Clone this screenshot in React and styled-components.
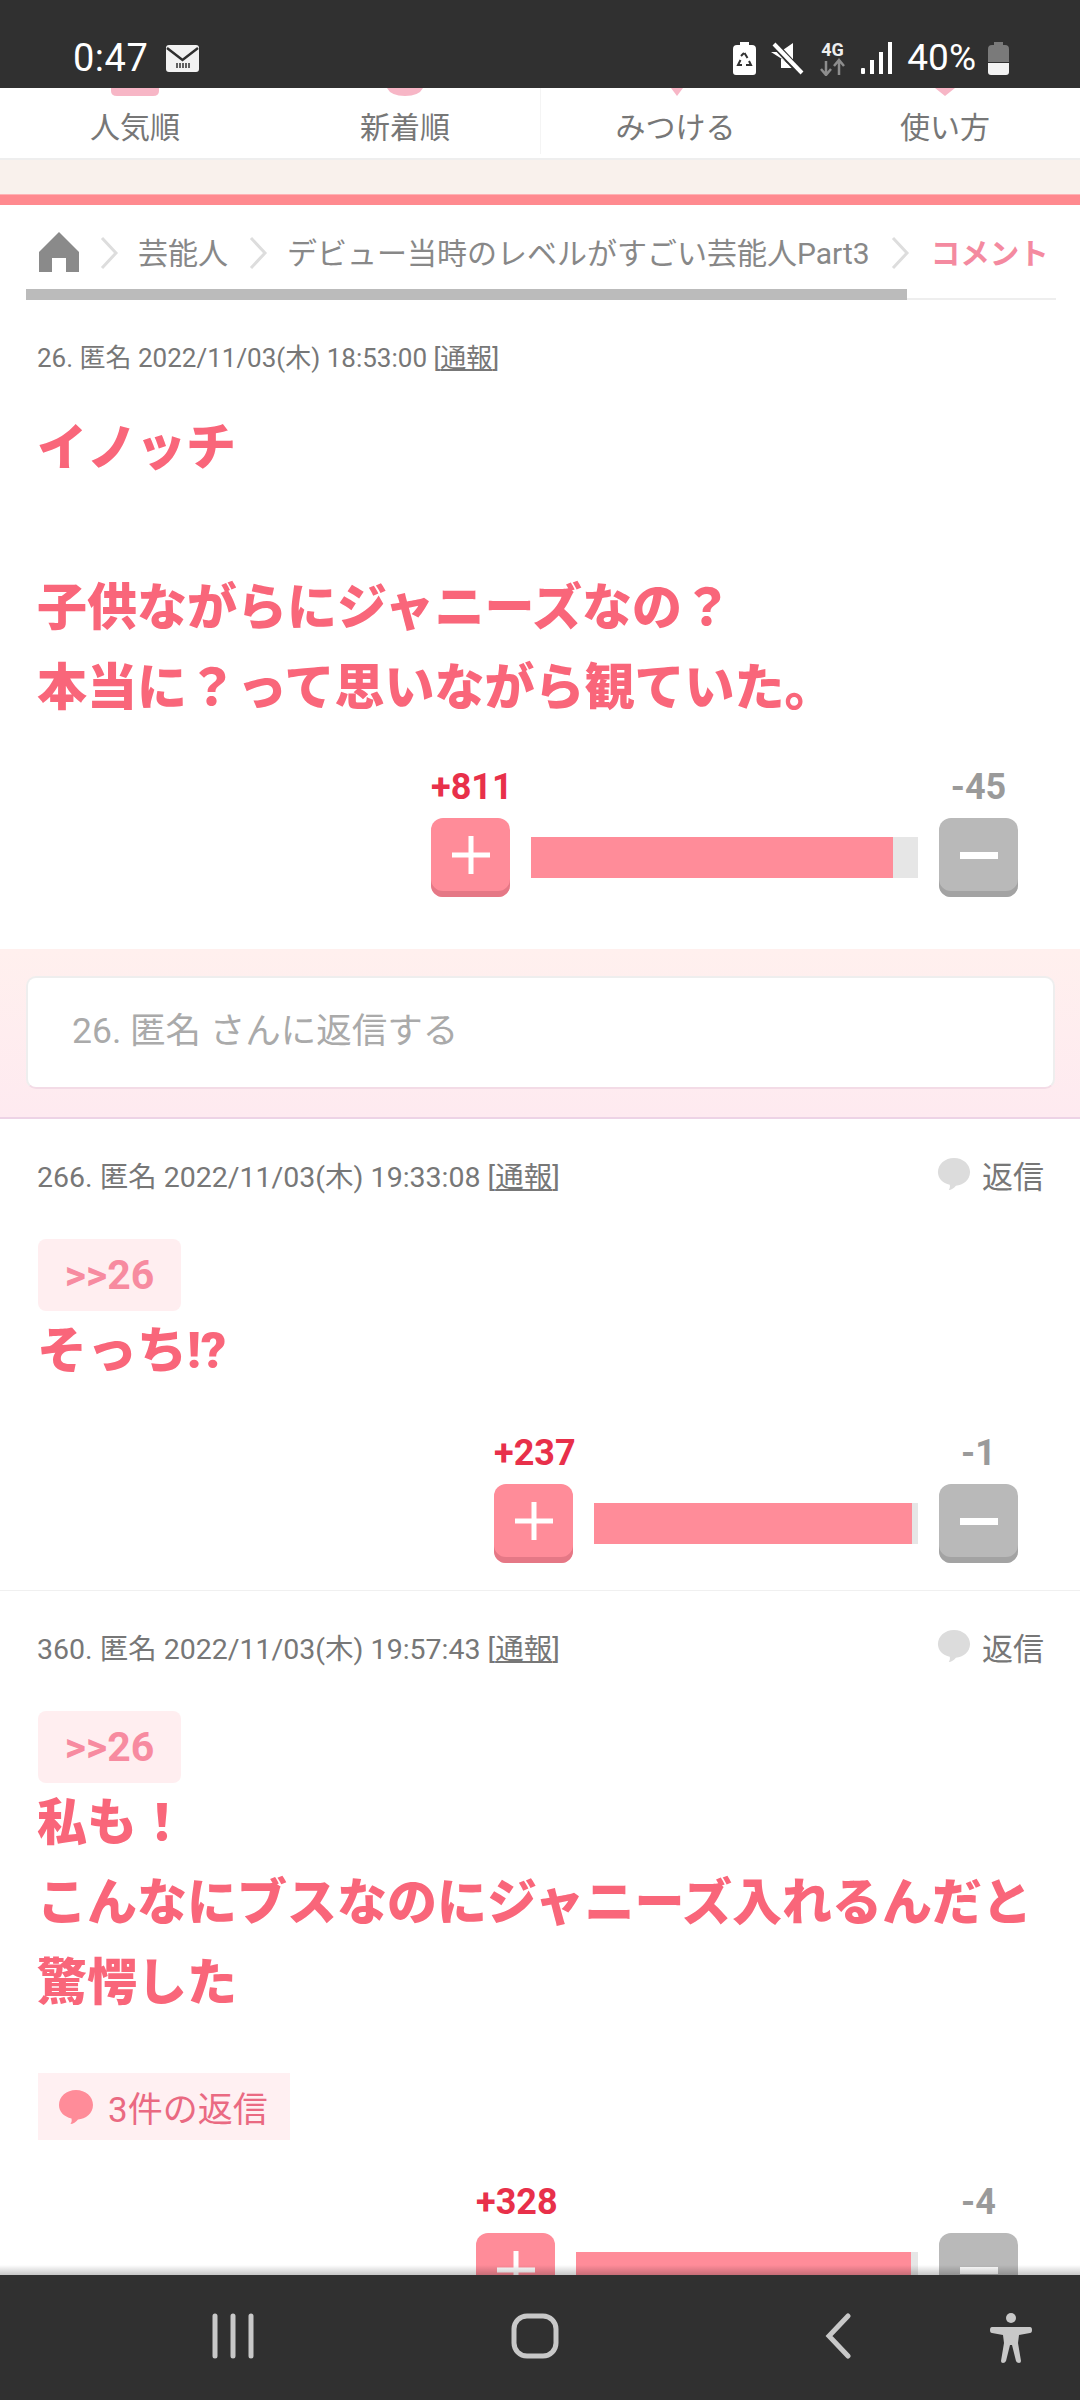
import React from "react";
import styled, { createGlobalStyle } from "styled-components";

const GlobalStyle = createGlobalStyle`
  html, body {
    margin: 0;
    padding: 0;
    background: #fff;
  }
  * {
    box-sizing: border-box;
  }
  body {
    font-family: Roboto, "Noto Sans CJK JP", sans-serif;
  }
`;

const Page = styled.div`
  width: 1080px;
  height: 2400px;
  display: flex;
  flex-direction: column;
  overflow: hidden;
`;

/* status bar */
const StatusBar = styled.div`
  flex: none;
  height: 88px;
  background: #303030;
  color: #fff;
  display: flex;
  align-items: center;
  justify-content: space-between;
  padding: 28px 71px 0 73px;
`;

const StatusGroup = styled.div`
  display: flex;
  align-items: center;
  gap: ${({ gap }) => gap}px;
`;

const Clock = styled.span`
  font-size: 38px;
  letter-spacing: 0.5px;
  line-height: 40px;
`;

const Percent = styled.span`
  font-size: 37px;
  line-height: 40px;
  margin: 0 -3px 0 0;
`;

/* tabs */
const Tabs = styled.nav`
  flex: none;
  height: 72px;
  display: grid;
  grid-template-columns: repeat(4, 1fr);
  border-bottom: 2px solid #eee;
`;

const Tab = styled.div`
  display: flex;
  flex-direction: column;
  align-items: center;
  color: #777;
  font-size: 30px;
  line-height: 40px;
  border-left: ${({ divided }) => (divided ? "1px solid #f4f4f4" : "0")};
  height: 66px;
`;

const TabPeek = styled.svg`
  display: block;
  height: 8px;
  width: 60px;
  margin-bottom: 12px;
`;

const Band = styled.div`
  flex: none;
  height: 34px;
  background: #f9f1ec;
`;

const Rule = styled.div`
  flex: none;
  height: 11px;
  background: #ff8a8f;
  border-top: 1px solid #ffb3b5;
`;

const Scroller = styled.main`
  flex: 1;
  min-height: 0;
  overflow: hidden;
`;

/* breadcrumb */
const Crumbs = styled.div`
  position: relative;
  height: 95px;
  margin: 0 24px 0 26px;
  padding: 27px 0 0 13px;
  display: flex;
  align-items: flex-start;
  border-bottom: 2px solid #eee;
  font-size: 30px;
  line-height: 44px;
  color: #888;
  white-space: nowrap;
`;

const CrumbThumb = styled.div`
  position: absolute;
  left: 0;
  bottom: -2px;
  height: 11px;
  width: 881px;
  background: #bbb;
`;

const Chevron = styled.svg`
  flex: none;
  width: 22px;
  height: 34px;
  margin: 4px ${({ right }) => right}px 0 20px;
`;

const CrumbCurrent = styled.b`
  color: #f48aa0;
  font-size: 29.5px;
  font-weight: 700;
`;

/* comments */
const Comment = styled.article`
  padding: 35px 37px 0 37px;
  border-bottom: ${({ divided }) => (divided ? "1px solid #f0f0f0" : "0")};
`;

const Meta = styled.div`
  display: flex;
  align-items: center;
  justify-content: space-between;
  height: 40px;
  color: #777;
  font-size: ${({ size }) => size}px;
  white-space: nowrap;
`;

const Report = styled.span`
  text-decoration: underline;
`;

const ReplyLink = styled.span`
  display: flex;
  align-items: center;
  gap: 11px;
  font-size: 31px;
  color: #777;
  margin-right: -1px;
`;

const Anchor = styled.div`
  width: 143px;
  height: 72px;
  margin: 45px 0 0 1px;
  border-radius: 8px;
  background: #ffeef0;
  color: #f78ba0;
  font-size: 41px;
  font-weight: 700;
  line-height: 72px;
  text-align: center;
`;

const Body = styled.p`
  margin: ${({ top }) => top}px 0 0 0;
  color: #f9667a;
  font-size: 50px;
  font-weight: 900;
  line-height: 80px;
  white-space: pre-line;
`;

const ReplyCount = styled.div`
  display: inline-flex;
  align-items: center;
  gap: 14px;
  height: 67px;
  margin: 50px 0 0 1px;
  padding: 0 22px 0 20px;
  background: #fff0f2;
  color: #ea6a82;
  font-size: 35px;
`;

const Vote = styled.div`
  width: ${({ width }) => width}px;
  margin: ${({ top }) => top}px 25px ${({ bottom }) => bottom}px auto;
  display: grid;
  grid-template-columns: 79px 1fr 79px;
  column-gap: 21px;
`;

const Count = styled.div`
  grid-column: ${({ column }) => column};
  height: 40px;
  margin-bottom: 11px;
  text-align: center;
  font-size: 36px;
  font-weight: 700;
  line-height: 40px;
  color: ${({ plus }) => (plus ? "#e8304a" : "#9a9a9a")};
  white-space: nowrap;
`;

const VoteButton = styled.div`
  height: 79px;
  border-radius: 12px;
  display: flex;
  align-items: center;
  justify-content: center;
  padding-bottom: 5px;
  background: ${({ plus }) => (plus ? "#ff8c99" : "#b9b9b9")};
  box-shadow: inset 0 -6px 0 ${({ plus }) => (plus ? "#e57886" : "#a3a3a3")};
`;

const Track = styled.div`
  align-self: center;
  height: 41px;
  background: #e6e6e6;
`;

const Fill = styled.div`
  height: 100%;
  background: #ff8c99;
`;

/* reply box */
const ReplyBox = styled.section`
  height: 170px;
  padding: 27px 25px 0 26px;
  background: linear-gradient(#fff0ee, #feeaf0);
  border-bottom: 2px solid #edd3e6;
`;

const ReplyInput = styled.div`
  height: 113px;
  padding-left: 44px;
  background: #fff;
  border: 2px solid #eee;
  border-bottom-color: #f3dbe6;
  border-radius: 10px;
  color: #aaa;
  font-size: 35.5px;
  line-height: 107px;
`;

/* navigation bar */
const NavBar = styled.footer`
  position: relative;
  flex: none;
  height: 125px;
  background: #303030;
  &::before {
    content: "";
    position: absolute;
    left: 0;
    right: 0;
    top: -10px;
    height: 10px;
    background: linear-gradient(rgba(0, 0, 0, 0), rgba(0, 0, 0, 0.22));
  }
`;

const NavIcons = styled.div`
  display: flex;
  align-items: flex-start;
  padding: 38px 0 0 212px;
`;

const NavIcon = styled.svg`
  display: block;
  flex: none;
  margin-left: ${({ left }) => left}px;
`;

const Bubble = ({ color, size }) => (
  <svg width={size} height={size} viewBox="0 0 36 36">
    <path
      fill={color}
      d="M18 1c9.500 0 17 6.600 17 15s-7.500 14-15 14.500c-2 2.500-5 4.500-7.500 4.500 1-1.500 1.500-3 1-5.500C6 27.500 1 23 1 16 1 7.600 8.500 1 18 1z"
    />
  </svg>
);

const Plus = () => (
  <svg width="38" height="38" viewBox="0 0 38 38">
    <path fill="#fff" d="M16.500 0h5v16.500H38v5H21.500V38h-5V21.500H0v-5h16.500z" />
  </svg>
);

const Minus = () => (
  <svg width="38" height="38" viewBox="0 0 38 38">
    <rect x="0" y="16" width="38" height="7" fill="#fff" />
  </svg>
);

const Votes = ({ plus, minus, rate, width, top, bottom }) => (
  <Vote width={width} top={top} bottom={bottom}>
    <Count plus column="1">
      +{plus}
    </Count>
    <Count column="3">-{minus}</Count>
    <VoteButton plus>
      <Plus />
    </VoteButton>
    <Track>
      <Fill style={{ width: `${rate}%` }} />
    </Track>
    <VoteButton>
      <Minus />
    </VoteButton>
  </Vote>
);

const ChevronIcon = ({ right }) => (
  <Chevron right={right} viewBox="0 0 22 34">
    <path d="M3 2l14 15L3 32" fill="none" stroke="#ddd" strokeWidth="3" />
  </Chevron>
);

const tabs = [
  { label: "人気順", peek: "M6 0h48v3q0 5-6 5H12q-6 0-6-5z" },
  { label: "新着順", peek: "M12 0h36q-4 8-18 8T12 0z" },
  { label: "みつける", peek: "M25 0h12l-6 8z" },
  { label: "使い方", peek: "M20 0h20l-10 8z" }
];

const App = () => (
  <Page>
    <GlobalStyle />
    <StatusBar>
      <StatusGroup gap={18}>
        <Clock>0:47</Clock>
        <svg width="33" height="27" viewBox="0 0 33 27">
          <rect width="33" height="27" rx="3" fill="#f2f2f2" />
          <path d="M1 3l15.500 12L32 3" fill="none" stroke="#303030" strokeWidth="2.500" />
          <path d="M11 23v-5M14 23v-5M17 23v-5M20 23v-5M23 23v-5" stroke="#303030" strokeWidth="1.500" />
        </svg>
      </StatusGroup>
      <StatusGroup gap={15}>
        <svg width="23" height="33" viewBox="0 0 23 33">
          <path fill="#fff" d="M7 0h9v3h3q4 0 4 4v23q0 3-3 3H3q-3 0-3-3V7q0-4 4-4h3z" />
          <path d="M11.500 11l3 5M16 19l2 4h-5M9 23H5l2.500-5M8 14l3-3" fill="none" stroke="#303030" strokeWidth="2" />
        </svg>
        <svg width="33" height="33" viewBox="0 0 33 33">
          <path fill="#fff" d="M0 10h9l13-9v23zM10 26l12 0-12-10z" />
          <path d="M2 1l29 31" stroke="#303030" strokeWidth="7" />
          <path d="M3 2l28 29" stroke="#fff" strokeWidth="4" />
        </svg>
        <svg width="27" height="35" viewBox="0 0 27 35">
          <text x="13.500" y="15" textAnchor="middle" fill="#eee" fontSize="18" fontWeight="700" fontFamily="Roboto">
            4G
          </text>
          <path d="M7 34V20M2 28l5 6 5-6" fill="none" stroke="#8d8d8d" strokeWidth="2.500" />
          <path d="M20 34V20M15 25l5-6 5 6" fill="none" stroke="#8d8d8d" strokeWidth="2.500" />
        </svg>
        <svg width="31" height="32" viewBox="0 0 31 32">
          <rect x="0" y="26" width="4" height="6" rx="1" fill="#fff" />
          <rect x="9" y="18" width="4" height="14" fill="#fff" />
          <rect x="18" y="10" width="4" height="22" fill="#fff" />
          <rect x="27" y="0" width="4" height="32" fill="#fff" />
        </svg>
        <Percent>40%</Percent>
        <svg width="21" height="33" viewBox="0 0 21 33">
          <path fill="#7a7a7a" d="M6 0h9v3h2q4 0 4 4v13H0V7q0-4 4-4h2z" />
          <path fill="#f2f2f2" d="M0 21h21v9q0 3-3 3H3q-3 0-3-3z" />
        </svg>
      </StatusGroup>
    </StatusBar>
    <Scroller>
      <Tabs>
        {tabs.map((tab, index) => (
          <Tab key={tab.label} divided={index === 2}>
            <TabPeek viewBox="0 0 60 8">
              <path d={tab.peek} fill="#f7b6c6" />
            </TabPeek>
            {tab.label}
          </Tab>
        ))}
      </Tabs>
      <Band />
      <Rule />
      <Crumbs>
        <svg width="40" height="40" viewBox="0 0 40 40">
          <path fill="#8a8a8a" d="M20 0l20 20v20H27V26H13v14H0V20z" />
        </svg>
        <ChevronIcon right={17} />
        <span>芸能人</span>
        <ChevronIcon right={17} />
        <span>デビュー当時のレベルがすごい芸能人Part3</span>
        <ChevronIcon right={19} />
        <CrumbCurrent>コメント</CrumbCurrent>
        <CrumbThumb />
      </Crumbs>
      <Comment>
        <Meta size={26}>
          <span>
            26. 匿名 2022/11/03(木) 18:53:00 [<Report>通報</Report>]
          </span>
        </Meta>
        <Body top={33}>{"イノッチ\n\n子供ながらにジャニーズなの？\n本当に？って思いながら観ていた。"}</Body>
        <Votes plus={811} minus={45} rate={93.5} width={587} top={39} bottom={52} />
      </Comment>
      <ReplyBox>
        <ReplyInput>26. 匿名 さんに返信する</ReplyInput>
      </ReplyBox>
      <Comment divided>
        <Meta size={28.5}>
          <span>
            266. 匿名 2022/11/03(木) 19:33:08 [<Report>通報</Report>]
          </span>
          <ReplyLink>
            <Bubble color="#dcdcdc" size={34} />
            返信
          </ReplyLink>
        </Meta>
        <Anchor>&gt;&gt;26</Anchor>
        <Body top={0}>そっち!?</Body>
        <Votes plus={237} minus={1} rate={98} width={524} top={42} bottom={27} />
      </Comment>
      <Comment>
        <Meta size={28.5}>
          <span>
            360. 匿名 2022/11/03(木) 19:57:43 [<Report>通報</Report>]
          </span>
          <ReplyLink>
            <Bubble color="#dcdcdc" size={34} />
            返信
          </ReplyLink>
        </Meta>
        <Anchor>&gt;&gt;26</Anchor>
        <Body top={0}>{"私も！\nこんなにブスなのにジャニーズ入れるんだと\n驚愕した"}</Body>
        <ReplyCount>
          <Bubble color="#ff8c99" size={36} />
          3件の返信
        </ReplyCount>
        <Votes plus={328} minus={4} rate={98} width={542} top={42} bottom={0} />
      </Comment>
    </Scroller>
    <NavBar>
      <NavIcons>
        <NavIcon width="42" height="46" viewBox="0 0 42 46">
          <path d="M3 3v40M21 3v40M39 3v40" stroke="#c8c8c8" strokeWidth="5" strokeLinecap="round" />
        </NavIcon>
        <NavIcon left={257} width="48" height="46" viewBox="0 0 48 46">
          <rect x="3" y="3" width="42" height="40" rx="13" fill="none" stroke="#c8c8c8" strokeWidth="5" />
        </NavIcon>
        <NavIcon left={266} width="26" height="46" viewBox="0 0 26 46">
          <path d="M23 3L4 23l19 20" fill="none" stroke="#c8c8c8" strokeWidth="5" strokeLinecap="round" />
        </NavIcon>
        <NavIcon left={139} width="42" height="50" viewBox="0 0 42 50">
          <circle cx="21" cy="5" r="5" fill="#c8c8c8" />
          <path fill="#c8c8c8" d="M2 14h38q2 0 2 3t-2 3l-11 2-1 8 3 18q0 2-2 2t-3-2l-4-16h-2l-4 16q-1 2-3 2t-2-2l3-18-1-8-11-2q-2 0-2-3t2-3z" />
        </NavIcon>
      </NavIcons>
    </NavBar>
  </Page>
);

export default App;
